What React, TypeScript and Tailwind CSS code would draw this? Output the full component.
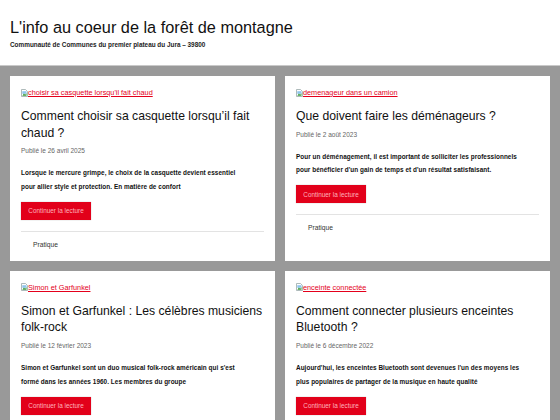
import React from "react";

type Post = { alt: string; title: string[]; date: string; excerpt: string[]; cat?: string };

// line breaks follow the reference
const posts: Post[] = [
  {
    alt: "choisir sa casquette lorsqu'il fait chaud",
    title: ["Comment choisir sa casquette lorsqu’il fait", "chaud ?"],
    date: "Publié le 26 avril 2025",
    excerpt: ["Lorsque le mercure grimpe, le choix de la casquette devient essentiel", "pour allier style et protection. En matière de confort"],
    cat: "Pratique",
  },
  {
    alt: "demenageur dans un camion",
    title: ["Que doivent faire les déménageurs ?"],
    date: "Publié le 2 août 2023",
    excerpt: ["Pour un déménagement, il est important de solliciter les professionnels", "pour bénéficier d'un gain de temps et d'un résultat satisfaisant."],
    cat: "Pratique",
  },
  {
    alt: "Simon et Garfunkel",
    title: ["Simon et Garfunkel : Les célèbres musiciens", "folk-rock"],
    date: "Publié le 12 février 2023",
    excerpt: ["Simon et Garfunkel sont un duo musical folk-rock américain qui s'est", "formé dans les années 1960. Les membres du groupe"],
    cat: "Pratique",
  },
  {
    alt: "enceinte connectée",
    title: ["Comment connecter plusieurs enceintes", "Bluetooth ?"],
    date: "Publié le 6 décembre 2022",
    excerpt: ["Aujourd'hui, les enceintes Bluetooth sont devenues l'un des moyens les", "plus populaires de partager de la musique en haute qualité"],
    cat: "Pratique",
  },
];

function BrokenImg() {
  return (
    <svg width="7" height="8" viewBox="0 0 7 8" className="shrink-0">
      <path d="M0.5 0.5h4l2 2v5h-6z" fill="#fff" stroke="#9aa" strokeWidth="0.8" />
      <rect x="1.3" y="2.2" width="4.2" height="2.6" fill="#8ec5ee" />
      <path d="M1.3 6.8l1.6-2.2 1.2 1.2 1.4-1.6v2.6z" fill="#3a9a3a" />
    </svg>
  );
}

function Card({ p }: { p: Post }) {
  return (
    <article className="bg-white px-[11px] pt-[11px] pb-[11px] flex flex-col">
      <a className="flex items-center h-[11px] text-[7.3px] leading-[11px] text-[#e4001b] underline">
        <BrokenImg />
        <span>{p.alt}</span>
      </a>
      <h2 className="mt-[10px] text-[12.2px] leading-[16.5px] text-[#111] font-normal">
        {p.title.map((l, i) => (
          <span key={i} className="block whitespace-nowrap">{l}</span>
        ))}
      </h2>
      <div className="mt-[5px] text-[6.5px] leading-[10px] text-[#666]">{p.date}</div>
      <p className="mt-[10px] text-[6.4px] tracking-[0.05px] leading-[13.7px] font-bold text-[#111]">
        {p.excerpt.map((l, i) => (
          <span key={i} className="block whitespace-nowrap">{l}</span>
        ))}
      </p>
      <div className="mt-[8.5px] flex">
        <a className="flex items-center justify-center w-[70px] h-[18px] bg-[#e2001a] text-[6.4px] text-[#ffb3bd] shadow-[0_0_1px_rgba(0,0,0,0.3)]">
          Continuer la lecture
        </a>
      </div>
      <div className="mt-[11px] border-t border-[#e3e3e3] pt-[8px] pl-[12px] text-[6.7px] leading-[10px] text-[#333]">
        {p.cat}
      </div>
    </article>
  );
}

export default function App() {
  return (
    <div className="w-[560px] h-[420px] overflow-hidden bg-[#999999]" style={{ fontFamily: '"Liberation Sans", Arial, sans-serif' }}>
      <header className="bg-white h-[66px] pt-[17px] pl-[10px] border-b border-[#c9c9c9]">
        <h1 className="text-[16.3px] leading-[20px] text-[#111] font-normal">L'info au coeur de la forêt de montagne</h1>
        <div className="mt-[3px] text-[6.4px] leading-[10px] font-bold text-[#222]">
          Communauté de Communes du premier plateau du Jura – 39800
        </div>
      </header>
      <main className="grid grid-cols-2 gap-[10px] px-[10px] pt-[10px]">
        {posts.map((p, i) => (
          <Card key={i} p={p} />
        ))}
      </main>
    </div>
  );
}
